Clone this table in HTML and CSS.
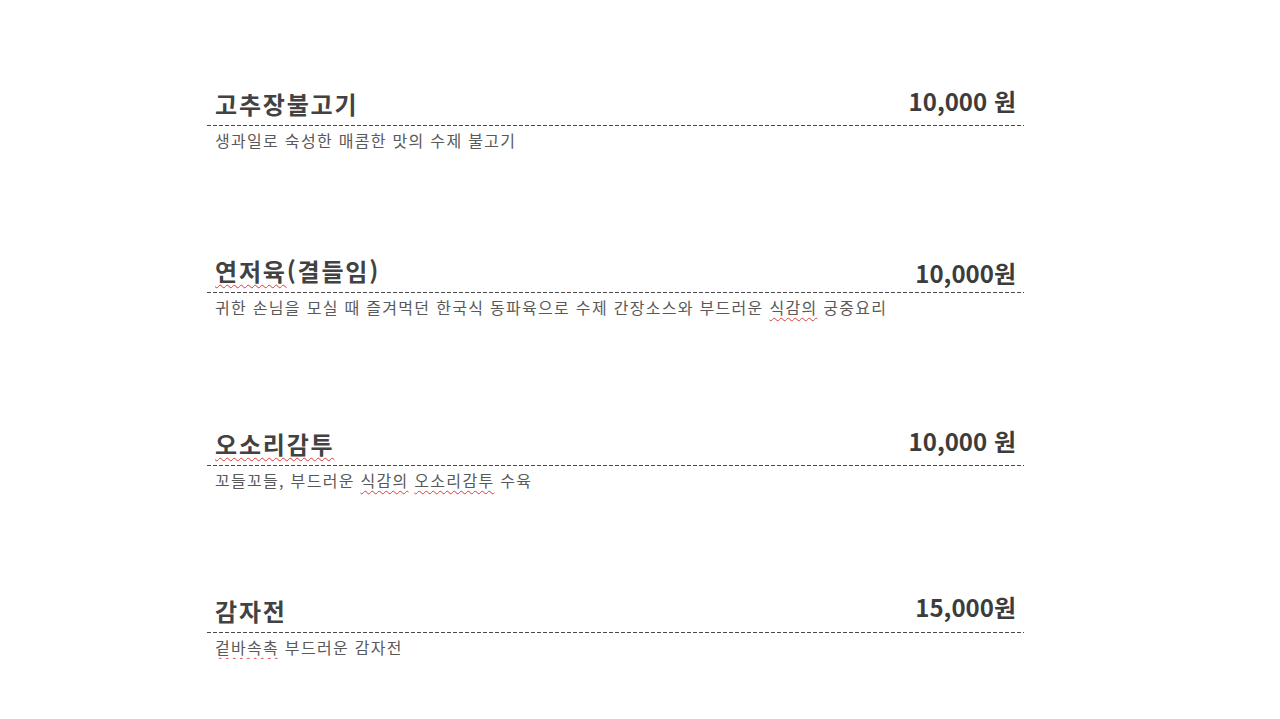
FILE: index.html
```html
<!DOCTYPE html>
<html lang="ko">
<head>
<meta charset="utf-8">
<title>메뉴</title>
<link rel="stylesheet" href="styles.css">
</head>
<body>
<main class="menu">
  <section class="item">
    <div class="item-head">
      <h2 class="item-title">고추장불고기</h2>
      <span class="item-price">10,000 원</span>
    </div>
    <p class="item-desc">생과일로 숙성한 매콤한 맛의 수제 불고기</p>
  </section>
  <section class="item">
    <div class="item-head">
      <h2 class="item-title"><span class="spell">연저육</span>(결들임)</h2>
      <span class="item-price item-price--low">10,000원</span>
    </div>
    <p class="item-desc">귀한 손님을 모실 때 즐겨먹던 한국식 동파육으로 수제 간장소스와 부드러운 <span class="spell">식감의</span> 궁중요리</p>
  </section>
  <section class="item item--loose">
    <div class="item-head">
      <h2 class="item-title"><span class="spell">오소리감투</span></h2>
      <span class="item-price">10,000 원</span>
    </div>
    <p class="item-desc">꼬들꼬들, 부드러운 <span class="spell">식감의</span> <span class="spell">오소리감투</span> 수육</p>
  </section>
  <section class="item">
    <div class="item-head">
      <h2 class="item-title">감자전</h2>
      <span class="item-price item-price--high">15,000원</span>
    </div>
    <p class="item-desc"><span class="spell">겉바속촉</span> 부드러운 감자전</p>
  </section>
</main>
</body>
</html>
```

FILE: styles.css
```css
html, body {
  margin: 0;
  padding: 0;
  background: #ffffff;
}

body {
  font-family: "Noto Sans CJK KR", "Noto Sans", sans-serif;
  color: #444444;
}

.menu {
  width: 817px;
  margin-left: 207px;
  padding-top: 88px;
  display: flex;
  flex-direction: column;
  gap: 103px;
}

.item--loose {
  margin-top: 6px;
}

.item-head {
  display: flex;
  justify-content: space-between;
  align-items: flex-start;
  height: 32px;
  padding: 0 8px 6px;
  background-image: repeating-linear-gradient(to right, #4a4a4a 0, #4a4a4a 4px, transparent 4px, transparent 6px);
  background-repeat: no-repeat;
  background-size: 100% 1px;
  background-position: left bottom;
  border-bottom: 1px solid transparent;
}

.item-title {
  margin: 0;
  font-size: 24px;
  line-height: 32px;
  font-weight: 700;
  letter-spacing: 1.8px;
  color: #424242;
}

.item-price {
  font-size: 24px;
  line-height: 26px;
  font-weight: 700;
  color: #3c3c3c;
}

.item-price--low {
  line-height: 36px;
}

.item-price--high {
  line-height: 24px;
}

.item-desc {
  margin: 1px 0 0;
  padding-left: 8px;
  font-size: 16px;
  line-height: 24px;
  letter-spacing: 1.3px;
  color: #595959;
}

.spell {
  text-decoration: underline wavy #e03a3a;
  text-decoration-thickness: 1px;
  text-underline-offset: 3px;
}
```
